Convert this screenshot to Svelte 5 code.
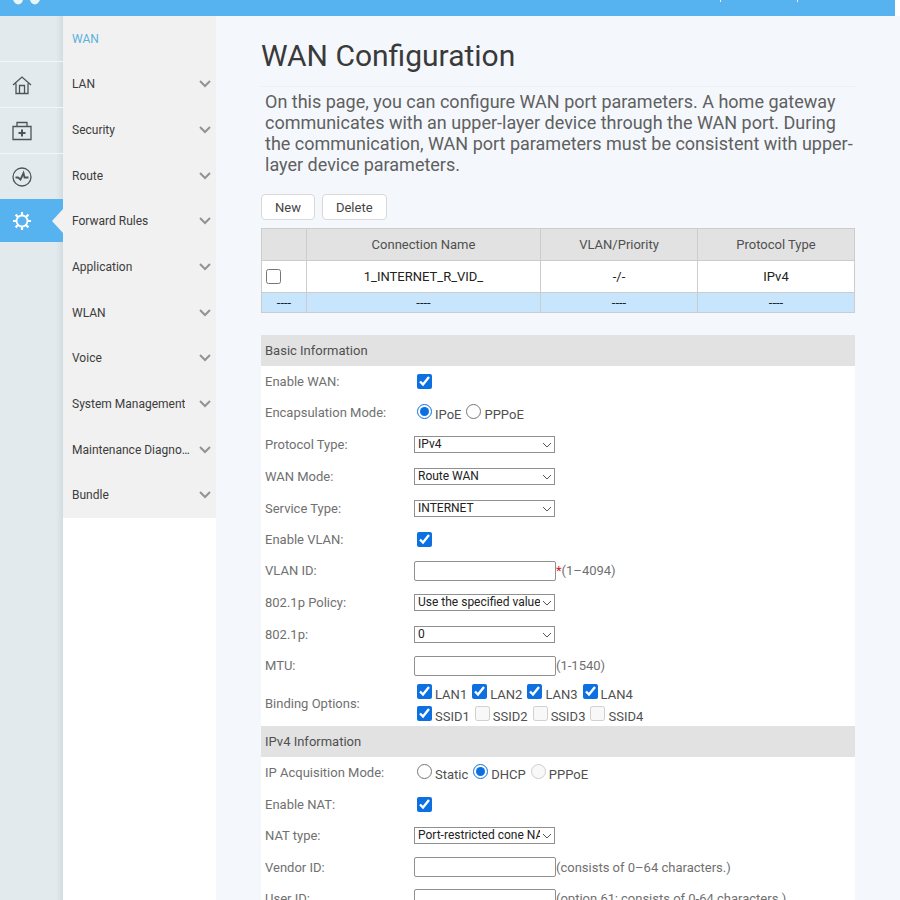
<script lang="ts">
  const menu = [
    "WAN",
    "LAN",
    "Security",
    "Route",
    "Forward Rules",
    "Application",
    "WLAN",
    "Voice",
    "System Management",
    "Maintenance Diagnosis",
    "Bundle",
  ];

  let current = $state("WAN");

  const lanPorts = ["LAN1", "LAN2", "LAN3", "LAN4"];
  const ssids = ["SSID1", "SSID2", "SSID3", "SSID4"];

  let encapsulation = $state("IPoE");
  let acquisition = $state("DHCP");
</script>

{#snippet dropdown(id: string, value: string)}
  <div class="select">
    <select {id}><option>{value}</option></select>
    <svg width="10" height="6" viewBox="0 0 10 6" aria-hidden="true">
      <path d="M1 1L5 5L9 1" />
    </svg>
  </div>
{/snippet}

<header>
  <svg class="logo" width="28" height="5" viewBox="0 0 28 5" aria-hidden="true">
    <path d="M0 0H10Q9 4 5 4.500Q2 4 0 0Z" fill="#e9f6f4" />
    <path d="M17 0H27Q25 4 22 4.500Q18 4 17 0Z" fill="#e9f6f4" />
  </svg>
  <div class="links"><i></i><i></i></div>
</header>

<div class="page">
  <nav class="rail" aria-label="Main">
    <div class="spacer"></div>
    <a href="#home" aria-label="Home">
      <svg width="20" height="20" viewBox="0 0 20 20">
        <path d="M1 10L10 2L19 10M4 8.500V18.500H16V8.500M7.500 18.500V10.500H12.500V18.500" />
      </svg>
    </a>
    <a href="#wizard" aria-label="Wizard">
      <svg width="20" height="20" viewBox="0 0 20 20">
        <path d="M1 5.500H19V18.500H1ZM5 5.500V1.500H15V5.500" />
        <path d="M10 8.500V15.500M6.500 12H13.500" stroke-width="2" />
      </svg>
    </a>
    <a href="#status" aria-label="Status">
      <svg width="20" height="20" viewBox="0 0 20 20">
        <circle cx="10" cy="10" r="9" />
        <path d="M3.500 10.500H6L8.500 12.500L11.500 6L12.500 10.500H16.500" stroke-width="1.800" />
      </svg>
    </a>
    <a href="#advanced" class="active" aria-label="Advanced">
      <svg width="20" height="20" viewBox="0 0 20 20">
        <circle cx="10" cy="10" r="5.500" stroke-width="1.800" />
        <path
          d="M10 4V1M10 16V19M4 10H1M16 10H19M5.800 5.800L3.600 3.600M14.200 5.800L16.400 3.600M5.800 14.200L3.600 16.400M14.200 14.200L16.400 16.400"
          stroke-width="2.200"
        />
      </svg>
    </a>
  </nav>

  <nav class="side" aria-label="Advanced">
    <ul>
      {#each menu as item}
        <li>
          <a href="#menu" class:current={item === current} onclick={() => (current = item)}>
            <span>{item}</span>
            {#if item !== "WAN"}
              <svg width="12" height="8" viewBox="0 0 12 8">
                <path d="M1 1L6 6L11 1" />
              </svg>
            {/if}
          </a>
        </li>
      {/each}
    </ul>
  </nav>

  <main>
    <h1>WAN Configuration</h1>
    <p class="intro">
      On this page, you can configure WAN port parameters. A home gateway communicates with an
      upper-layer device through the WAN port. During the communication, WAN port parameters must be
      consistent with upper-layer device parameters.
    </p>

    <div class="actions">
      <button type="button">New</button>
      <button type="button">Delete</button>
    </div>

    <table>
      <thead>
        <tr>
          <th class="pick"></th>
          <th>Connection Name</th>
          <th class="narrow">VLAN/Priority</th>
          <th class="narrow">Protocol Type</th>
        </tr>
      </thead>
      <tbody>
        <tr>
          <td class="pick"><input type="checkbox" aria-label="Select connection" /></td>
          <td>1_INTERNET_R_VID_</td>
          <td>-/-</td>
          <td>IPv4</td>
        </tr>
        <tr class="empty">
          <td>----</td>
          <td>----</td>
          <td>----</td>
          <td>----</td>
        </tr>
      </tbody>
    </table>

    <form>
      <h2>Basic Information</h2>
      <div class="row">
        <label for="enableWan">Enable WAN:</label>
        <div class="field options"><input id="enableWan" type="checkbox" checked /></div>
      </div>
      <div class="row">
        <span class="name">Encapsulation Mode:</span>
        <div class="field options">
          <label><input type="radio" value="IPoE" bind:group={encapsulation} />IPoE</label>
          <label><input type="radio" value="PPPoE" bind:group={encapsulation} />PPPoE</label>
        </div>
      </div>
      <div class="row tall">
        <label for="protocol">Protocol Type:</label>
        {@render dropdown("protocol", "IPv4")}
      </div>
      <div class="row tall">
        <label for="wanMode">WAN Mode:</label>
        {@render dropdown("wanMode", "Route WAN")}
      </div>
      <div class="row tall">
        <label for="service">Service Type:</label>
        {@render dropdown("service", "INTERNET")}
      </div>
      <div class="row">
        <label for="enableVlan">Enable VLAN:</label>
        <div class="field options"><input id="enableVlan" type="checkbox" checked /></div>
      </div>
      <div class="row">
        <label for="vlanId">VLAN ID:</label>
        <div class="field"><input id="vlanId" type="text" /><b>*</b>(1–4094)</div>
      </div>
      <div class="row tall">
        <label for="policy">802.1p Policy:</label>
        {@render dropdown("policy", "Use the specified value")}
      </div>
      <div class="row tall">
        <label for="priority">802.1p:</label>
        {@render dropdown("priority", "0")}
      </div>
      <div class="row">
        <label for="mtu">MTU:</label>
        <div class="field"><input id="mtu" type="text" />(1-1540)</div>
      </div>
      <div class="row binding">
        <span class="name">Binding Options:</span>
        <div>
          <div class="field options">
            {#each lanPorts as port}
              <label><input type="checkbox" checked />{port}</label>
            {/each}
          </div>
          <div class="field options">
            {#each ssids as ssid, i}
              <label><input type="checkbox" checked={i === 0} disabled={i > 0} />{ssid}</label>
            {/each}
          </div>
        </div>
      </div>

      <h2>IPv4 Information</h2>
      <div class="row">
        <span class="name">IP Acquisition Mode:</span>
        <div class="field options">
          <label><input type="radio" value="Static" bind:group={acquisition} />Static</label>
          <label><input type="radio" value="DHCP" bind:group={acquisition} />DHCP</label>
          <label><input type="radio" value="PPPoE" bind:group={acquisition} disabled />PPPoE</label>
        </div>
      </div>
      <div class="row tall">
        <label for="enableNat">Enable NAT:</label>
        <div class="field options"><input id="enableNat" type="checkbox" checked /></div>
      </div>
      <div class="row">
        <label for="natType">NAT type:</label>
        {@render dropdown("natType", "Port-restricted cone NAT")}
      </div>
      <div class="row tall">
        <label for="vendorId">Vendor ID:</label>
        <div class="field"><input id="vendorId" type="text" />(consists of 0–64 characters.)</div>
      </div>
      <div class="row">
        <label for="userId">User ID:</label>
        <div class="field">
          <input id="userId" type="text" />(option 61; consists of 0-64 characters.)
        </div>
      </div>
    </form>
  </main>
</div>

<style>
  :global(body) {
    background: #f4f8fd;
    color: #444;
    font-family: Roboto, "Liberation Sans", sans-serif;
    font-size: 13px;
  }

  :global(html) {
    scrollbar-width: none;
  }

  header {
    display: flex;
    justify-content: space-between;
    align-items: flex-start;
    height: 16px;
    margin-right: 5px;
    padding: 0 97px 0 13px;
    background: #57b2f0;
    box-shadow: 5px 0 #fff;
  }

  .links {
    display: flex;
    gap: 76px;
  }

  .links i {
    width: 1px;
    height: 2px;
    background: #e4f4ff;
  }

  .page {
    display: flex;
    min-height: calc(100vh - 16px);
  }

  .rail {
    flex: none;
    width: 63px;
    background: linear-gradient(to right, #e2eaee 56px, #d3dce1);
  }

  .rail .spacer {
    height: 45px;
  }

  .rail a {
    position: relative;
    display: flex;
    align-items: center;
    box-sizing: border-box;
    height: 46px;
    padding-left: 12px;
    border-top: 1px solid #f1f6f8;
  }

  .rail svg {
    fill: none;
    stroke: #4b5459;
    stroke-width: 1.3;
  }

  .rail .active {
    height: 43px;
    border: 0;
    background: #57b2f0;
  }

  .rail .active svg {
    stroke: #fff;
  }

  .rail .active::after {
    content: "";
    position: absolute;
    right: 0;
    top: 10px;
    border: solid transparent;
    border-width: 12px 11px 12px 0;
    border-right-color: #f1f1f1;
  }

  .side {
    flex: none;
    width: 153px;
    background: #fff;
  }

  .side ul {
    display: grid;
    grid-auto-rows: 1fr;
    min-height: 502px;
    margin: 0;
    padding: 0;
    list-style: none;
    background: #f1f1f1;
  }

  .side li {
    display: grid;
  }

  .side a {
    display: flex;
    align-items: center;
    justify-content: space-between;
    min-width: 0;
    padding: 0 5px 0 9px;
    color: #3c3c3c;
    font-size: 12px;
    text-decoration: none;
  }

  .side a.current {
    color: #5cb2dd;
  }

  .side span {
    max-width: 118px;
    overflow: hidden;
    text-overflow: ellipsis;
    white-space: nowrap;
  }

  .side svg {
    fill: none;
    stroke: #8f9499;
    stroke-width: 2;
  }

  main {
    flex: 1;
    min-width: 0;
    padding: 20px 45px 0;
  }

  h1 {
    margin: 0;
    padding-bottom: 10px;
    border-bottom: 1px solid #eceff4;
    color: #3a3a3a;
    font-size: 30px;
    font-weight: 400;
    line-height: 40px;
  }

  .intro {
    margin: 4px -4px 19px 4px;
    color: #606060;
    font-size: 18px;
    line-height: 21px;
  }

  .actions {
    display: flex;
    gap: 7px;
    margin-bottom: 8px;
  }

  button {
    height: 26px;
    padding: 0 13px;
    border: 1px solid #d9d9d9;
    border-radius: 4px;
    background: #fff;
    color: #444;
    font: inherit;
  }

  table {
    width: 100%;
    border-collapse: collapse;
    table-layout: fixed;
    background: #fff;
    color: #222;
  }

  th,
  td {
    height: 31px;
    padding: 0;
    border: 1px solid #ccc;
    text-align: center;
  }

  th {
    background: #e2e2e2;
    color: #505050;
    font-weight: 400;
  }

  .pick {
    width: 44px;
  }

  .narrow {
    width: 156px;
  }

  td.pick {
    text-align: left;
  }

  td.pick input {
    display: block;
    margin-left: 4px;
  }

  .empty td {
    height: 19px;
    background: #c7e6fe;
  }

  form {
    margin-top: 22px;
    background: #fff;
  }

  h2 {
    margin: 0;
    padding-left: 4px;
    background: #e2e2e2;
    color: #505050;
    font-size: 13px;
    font-weight: 400;
    line-height: 31px;
  }

  .row {
    display: grid;
    grid-template-columns: 149px 1fr;
    align-items: center;
    min-height: 31px;
    padding-left: 4px;
    color: #707070;
  }

  .row.tall {
    min-height: 32px;
  }

  .row.binding {
    min-height: 45px;
  }

  .field {
    display: flex;
    align-items: center;
  }

  .options {
    gap: 5px;
    min-height: 22px;
    padding-left: 3px;
    color: #505050;
  }

  .options label {
    display: flex;
    align-items: baseline;
    gap: 3px;
  }

  input[type="checkbox"],
  input[type="radio"] {
    width: 15px;
    height: 15px;
    margin: 0;
    accent-color: #0d70e0;
  }

  input[type="text"] {
    box-sizing: border-box;
    width: 142px;
    height: 20px;
    border: 1px solid #909090;
    border-radius: 2px;
    font: inherit;
  }

  .select {
    position: relative;
    display: flex;
    width: 141px;
  }

  .select svg {
    position: absolute;
    top: 6px;
    right: 3px;
    fill: none;
    stroke: #555;
    pointer-events: none;
  }

  select {
    appearance: none;
    box-sizing: border-box;
    width: 100%;
    height: 17px;
    padding: 0 14px 0 3px;
    border: 1px solid #909090;
    border-radius: 0;
    background: #fff;
    color: #222;
    font: inherit;
    font-size: 12px;
    line-height: 15px;
  }

  b {
    color: #d0202e;
    font-weight: 400;
  }
</style>
